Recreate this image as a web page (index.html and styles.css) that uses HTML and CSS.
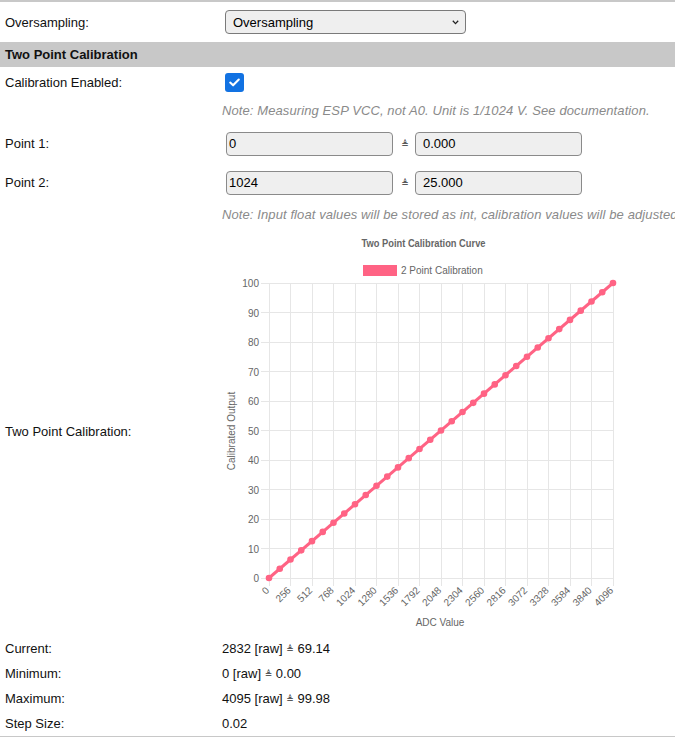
FILE: index.html
```html
<!DOCTYPE html>
<html lang="en">
<head>
<meta charset="utf-8">
<title>Analog Input – Two Point Calibration</title>
<link rel="stylesheet" href="styles.css">
</head>
<body>
<div class="settings">
  <div class="row row-select">
    <div class="label">Oversampling:</div>
    <div class="value">
      <span class="select-wrap">
        <select class="select">
          <option>Oversampling</option>
        </select>
        <svg class="chevron" width="7" height="5" viewBox="0 0 7 5"><path d="M0.8 0.8 L3.5 3.6 L6.2 0.8" fill="none" stroke="#222" stroke-width="1.3"/></svg>
      </span>
    </div>
  </div>

  <div class="section">Two Point Calibration</div>

  <div class="row row-check">
    <div class="label">Calibration Enabled:</div>
    <div class="value">
      <span class="check" role="checkbox" aria-checked="true">
        <svg width="19" height="19" viewBox="0 0 19 19"><path d="M5.2 9.6 L8.1 12.3 L13.8 6.6" fill="none" stroke="#fff" stroke-width="2.1" stroke-linecap="round" stroke-linejoin="round"/></svg>
      </span>
    </div>
  </div>

  <div class="row row-note1">
    <div></div>
    <div class="value note">Note: Measuring ESP VCC, not A0. Unit is 1/1024 V. See documentation.</div>
  </div>

  <div class="row row-point">
    <div class="label">Point 1:</div>
    <div class="value pair">
      <input class="field field-raw" type="text" value="0">
      <span class="equiv">≜</span>
      <input class="field field-out" type="text" value="0.000">
    </div>
  </div>

  <div class="row row-point">
    <div class="label">Point 2:</div>
    <div class="value pair">
      <input class="field field-raw" type="text" value="1024">
      <span class="equiv">≜</span>
      <input class="field field-out" type="text" value="25.000">
    </div>
  </div>

  <div class="row row-note2">
    <div></div>
    <div class="value note note-clip">Note: Input float values will be stored as int, calibration values will be adjusted accordingly.</div>
  </div>

  <div class="row row-chart">
    <div class="label">Two Point Calibration:</div>
    <div class="value">
      <svg class="chart" width="453" height="410" viewBox="222 226 453 410">
        <!-- title and legend -->
        <text class="chart-title" x="423.5" y="247" text-anchor="middle" textLength="124" lengthAdjust="spacingAndGlyphs">Two Point Calibration Curve</text>
        <rect x="363" y="265" width="34" height="11" fill="#ff6384"/>
        <text class="chart-text" x="401" y="274">2 Point Calibration</text>

        <!-- grid -->
        <g class="grid">
          <line x1="261" y1="283.5" x2="613" y2="283.5"/>
          <line x1="261" y1="312.5" x2="613" y2="312.5"/>
          <line x1="261" y1="342.5" x2="613" y2="342.5"/>
          <line x1="261" y1="371.5" x2="613" y2="371.5"/>
          <line x1="261" y1="401.5" x2="613" y2="401.5"/>
          <line x1="261" y1="430.5" x2="613" y2="430.5"/>
          <line x1="261" y1="460.5" x2="613" y2="460.5"/>
          <line x1="261" y1="489.5" x2="613" y2="489.5"/>
          <line x1="261" y1="519.5" x2="613" y2="519.5"/>
          <line x1="261" y1="548.5" x2="613" y2="548.5"/>
          <line x1="261" y1="578.5" x2="613" y2="578.5"/>

          <line x1="269.5" y1="283" x2="269.5" y2="586"/>
          <line x1="290.5" y1="283" x2="290.5" y2="586"/>
          <line x1="312.5" y1="283" x2="312.5" y2="586"/>
          <line x1="333.5" y1="283" x2="333.5" y2="586"/>
          <line x1="355.5" y1="283" x2="355.5" y2="586"/>
          <line x1="376.5" y1="283" x2="376.5" y2="586"/>
          <line x1="398.5" y1="283" x2="398.5" y2="586"/>
          <line x1="419.5" y1="283" x2="419.5" y2="586"/>
          <line x1="441.5" y1="283" x2="441.5" y2="586"/>
          <line x1="462.5" y1="283" x2="462.5" y2="586"/>
          <line x1="484.5" y1="283" x2="484.5" y2="586"/>
          <line x1="505.5" y1="283" x2="505.5" y2="586"/>
          <line x1="527.5" y1="283" x2="527.5" y2="586"/>
          <line x1="548.5" y1="283" x2="548.5" y2="586"/>
          <line x1="570.5" y1="283" x2="570.5" y2="586"/>
          <line x1="591.5" y1="283" x2="591.5" y2="586"/>
          <line x1="613.5" y1="283" x2="613.5" y2="586"/>
        </g>

        <!-- y axis -->
        <g class="chart-text" text-anchor="end">
          <text x="259" y="287">100</text>
          <text x="259" y="316.5">90</text>
          <text x="259" y="346">80</text>
          <text x="259" y="375.5">70</text>
          <text x="259" y="405">60</text>
          <text x="259" y="434.5">50</text>
          <text x="259" y="464">40</text>
          <text x="259" y="493.5">30</text>
          <text x="259" y="523">20</text>
          <text x="259" y="552.5">10</text>
          <text x="259" y="582">0</text>
        </g>
        <text class="chart-text" transform="translate(235 431) rotate(-90)" text-anchor="middle">Calibrated Output</text>

        <!-- x axis -->
        <g class="chart-text" text-anchor="end">
          <text transform="translate(270 591) rotate(-45)">0</text>
          <text transform="translate(291.5 591) rotate(-45)">256</text>
          <text transform="translate(313 591) rotate(-45)">512</text>
          <text transform="translate(334.5 591) rotate(-45)">768</text>
          <text transform="translate(356 591) rotate(-45)">1024</text>
          <text transform="translate(377.5 591) rotate(-45)">1280</text>
          <text transform="translate(399 591) rotate(-45)">1536</text>
          <text transform="translate(420.5 591) rotate(-45)">1792</text>
          <text transform="translate(442 591) rotate(-45)">2048</text>
          <text transform="translate(463.5 591) rotate(-45)">2304</text>
          <text transform="translate(485 591) rotate(-45)">2560</text>
          <text transform="translate(506.5 591) rotate(-45)">2816</text>
          <text transform="translate(528 591) rotate(-45)">3072</text>
          <text transform="translate(549.5 591) rotate(-45)">3328</text>
          <text transform="translate(571 591) rotate(-45)">3584</text>
          <text transform="translate(592.5 591) rotate(-45)">3840</text>
          <text transform="translate(614 591) rotate(-45)">4096</text>
        </g>
        <text class="chart-text" x="440" y="626" text-anchor="middle">ADC Value</text>

        <!-- data: one point every 128 counts -->
        <line class="series" x1="269" y1="578" x2="613" y2="283"/>
        <line class="series-points" x1="269" y1="578" x2="613" y2="283" pathLength="32"/>
        <circle cx="613" cy="283" r="3.3" fill="#ff6384"/>
      </svg>
    </div>
  </div>

  <div class="row row-data">
    <div class="label">Current:</div>
    <div class="value">2832 [raw] <span class="equiv-inline">≜</span> 69.14</div>
  </div>
  <div class="row row-data">
    <div class="label">Minimum:</div>
    <div class="value">0 [raw] <span class="equiv-inline">≜</span> 0.00</div>
  </div>
  <div class="row row-data">
    <div class="label">Maximum:</div>
    <div class="value">4095 [raw] <span class="equiv-inline">≜</span> 99.98</div>
  </div>
  <div class="row row-data">
    <div class="label">Step Size:</div>
    <div class="value">0.02</div>
  </div>
</div>
</body>
</html>
```

FILE: styles.css
```css
* {
  box-sizing: border-box;
}

html,
body {
  margin: 0;
  padding: 0;
}

body {
  font-family: "Liberation Sans", Arial, sans-serif;
  font-size: 13px;
  color: #111;
  background: #fff;
  overflow: hidden;
}

.settings {
  width: 675px;
  border-top: 2px solid #c8c8c8;
  border-bottom: 1px solid #c8c8c8;
}

.row {
  display: grid;
  grid-template-columns: 222px 1fr;
  align-items: center;
}

.label {
  padding-left: 5px;
  white-space: nowrap;
}

.value {
  white-space: nowrap;
  min-width: 0;
}

.row-select { height: 40px; }
.row-check { height: 30px; }
.row-note1 { height: 27px; }
.row-point { height: 39px; }
.row-note2 { height: 24px; }
.row-chart { height: 410px; }
.row-data { height: 25px; }

.section {
  height: 25px;
  line-height: 25px;
  padding-left: 5px;
  background: #c8c8c8;
  font-weight: bold;
  color: #111;
}

/* dropdown */
.select-wrap {
  position: relative;
  display: inline-block;
  margin-left: 3px;
  vertical-align: middle;
}

.select {
  -webkit-appearance: none;
  appearance: none;
  display: block;
  width: 241px;
  height: 24px;
  margin: 0;
  padding: 0 20px 0 7px;
  border: 1px solid #7a7a7a;
  border-radius: 4px;
  background: #efefef;
  font: inherit;
  color: #000;
}

.chevron {
  position: absolute;
  right: 7px;
  top: 10px;
  pointer-events: none;
}

/* checkbox */
.check {
  display: block;
  width: 19px;
  height: 19px;
  margin-left: 3px;
  border-radius: 3px;
  background: #1272e2;
}

.check svg {
  display: block;
}

/* notes */
.note {
  font-style: italic;
  color: #8a8a8a;
  letter-spacing: 0.1px;
}

/* the long note runs into the page edge and is clipped there */
.note-clip {
  overflow: hidden;
}

/* raw / calibrated value pairs */
.pair {
  display: flex;
  align-items: center;
  padding-left: 4px;
}

.field {
  width: 167px;
  height: 24px;
  margin: 0;
  border: 1px solid #8a8a8a;
  border-radius: 4px;
  background: #efefef;
  font: inherit;
  color: #000;
  outline: none;
}

.field-raw {
  padding: 0 2px;
}

.field-out {
  padding: 0 7px;
}

.equiv {
  width: 22px;
  padding-left: 2px;
  text-align: center;
  font-family: "DejaVu Sans", sans-serif;
  font-size: 9px;
  color: #333;
}

.equiv-inline {
  font-family: "DejaVu Sans", sans-serif;
  font-size: 9px;
  color: #333;
  vertical-align: 1px;
}

/* chart */
.chart {
  display: block;
}

.chart-title {
  font-family: "Liberation Sans", Arial, sans-serif;
  font-size: 10px;
  font-weight: bold;
  fill: #666;
}

.chart-text {
  font-family: "Liberation Sans", Arial, sans-serif;
  font-size: 10px;
  fill: #666;
}

.grid line {
  stroke: #e6e6e6;
  stroke-width: 1;
  shape-rendering: crispEdges;
}

.series {
  stroke: #ff6384;
  stroke-width: 3;
}

.series-points {
  stroke: #ff6384;
  stroke-width: 6.6;
  stroke-linecap: round;
  stroke-dasharray: 0 1;
}
```
